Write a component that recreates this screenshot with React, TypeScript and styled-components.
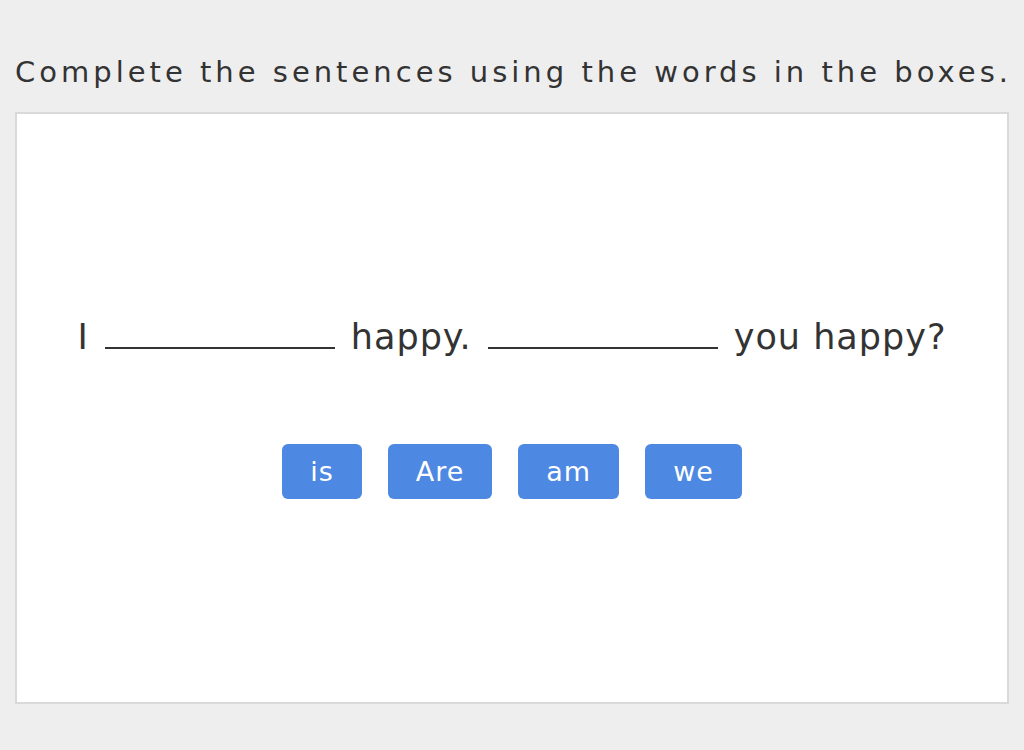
import React from 'react';
import styled, { createGlobalStyle } from 'styled-components';

const GlobalStyle = createGlobalStyle`
  html, body {
    margin: 0;
    padding: 0;
    background: #eeeeee;
    font-family: "DejaVu Sans", "Liberation Sans", sans-serif;
    color: #333333;
  }
`;

const words = ['is', 'Are', 'am', 'we'];

const App: React.FC = () => {
  return (
    <>
      <GlobalStyle />
      <Page>
        <Title>Complete the sentences using the words in the boxes.</Title>
        <Board>
          <Sentence>
            <Word>I</Word>
            <Blank />
            <Word>happy.</Word>
            <Blank />
            <Word>you happy?</Word>
          </Sentence>
          <Choices>
            {words.map((w) => (
              <Choice key={w} type="button">{w}</Choice>
            ))}
          </Choices>
        </Board>
      </Page>
    </>
  );
};

const Page = styled.div`
  width: 1024px;
  height: 750px;
  padding: 53px 15px 0;
  box-sizing: border-box;
  display: flex;
  flex-direction: column;
  align-items: stretch;
`;

const Title = styled.h1`
  margin: 0 0 20px;
  font-size: 29px;
  font-weight: normal;
  letter-spacing: 4px;
  line-height: 39px;
  white-space: nowrap;
  text-align: center;
  color: #333333;
`;

const Board = styled.div`
  height: 592px;
  width: 994px;
  box-sizing: border-box;
  background: #ffffff;
  border: 2px solid #d9d9d9;
  display: flex;
  flex-direction: column;
  align-items: center;
  justify-content: center;
  gap: 88px;
`;

const Sentence = styled.div`
  display: flex;
  align-items: baseline;
  gap: 16px;
  font-size: 35px;
  letter-spacing: 1px;
  color: #333333;
`;

const Word = styled.span`
  line-height: 38px;
`;

const Blank = styled.span`
  display: inline-block;
  width: 230px;
  height: 2px;
  background: #333333;
`;

const Choices = styled.div`
  display: flex;
  gap: 26px;
`;

const Choice = styled.button`
  height: 55px;
  min-width: 77px;
  padding: 0 28px;
  border: none;
  border-radius: 6px;
  background: #4d88e2;
  color: #ffffff;
  font-family: "DejaVu Sans", "Liberation Sans", sans-serif;
  font-size: 27px;
  letter-spacing: 1px;
  cursor: pointer;
`;

export default App;
